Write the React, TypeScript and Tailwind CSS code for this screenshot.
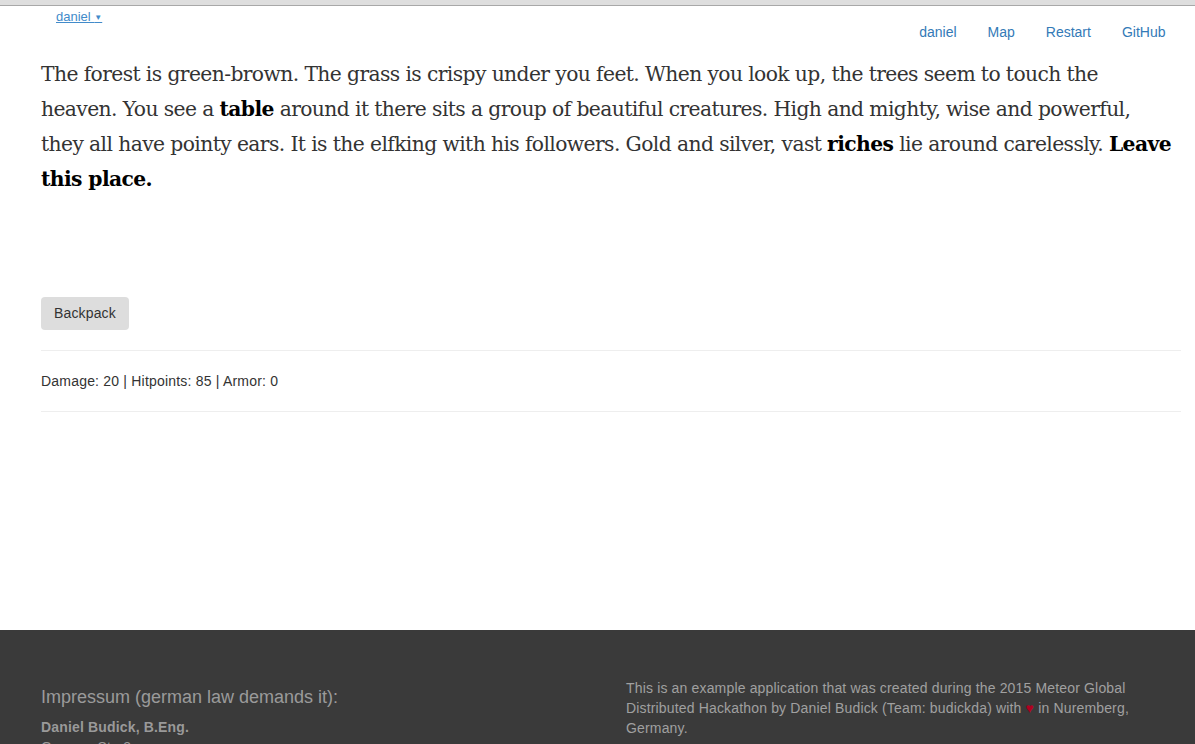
export default function App() {
  return (
    <div className="min-h-[744px] bg-white font-['Liberation_Sans',Arial,sans-serif] text-[14px] text-[#333]">
      <div className="h-[6px] border-b border-[#a8a8a8] bg-[#dedede]" />

      <div className="flex h-[51px] items-start justify-between pl-[41px] pr-[14px]">
        <a href="#" className="ml-[15px] mt-[3px] text-[13px] leading-[16px] text-[#428bca] underline">
          daniel <span className="text-[8px] align-middle">▼</span>
        </a>
        <ul className="mt-[1px] flex items-center">
          {["daniel", "Map", "Restart", "GitHub"].map((x) => (
            <li key={x}>
              <a href="#" className="block px-[15.5px] py-[15px] leading-[20px] text-[#337ab7]">
                {x}
              </a>
            </li>
          ))}
        </ul>
      </div>

      <div className="pl-[41px] pr-[14px]">
        <p className="whitespace-nowrap font-['DejaVu_Serif',serif] text-[20.3px] leading-[35px] tracking-[-0.6px] text-[#333]">
          The forest is green-brown. The grass is crispy under you feet. When you look up, the trees seem to
          touch the
          <br />
          heaven. You see a <b className="text-black">table</b> around it there sits a group of beautiful
          creatures. High and mighty, wise and powerful,
          <br />
          they all have pointy ears. It is the elfking with his followers. Gold and silver, vast{" "}
          <b className="text-black">riches</b> lie around carelessly. <b className="text-black">Leave</b>
          <br />
          <b className="text-black">this place.</b>
        </p>

        <button className="mt-[100px] rounded-[4px] bg-[#dddddd] px-[13px] py-[6px] leading-[21px] tracking-[0.15px] text-[#333]">
          Backpack
        </button>

        <hr className="mt-[20px] border-t border-[#eeeeee]" />
        <p className="py-[20px] leading-[20px] tracking-[0.2px]">Damage: 20 | Hitpoints: 85 | Armor: 0</p>
        <hr className="border-t border-[#eeeeee]" />
      </div>

      <footer className="mt-[218px] bg-[#3a3a3a] pl-[41px] pr-[14px] pt-[48px] pb-[30px] tracking-[0.16px] text-[#999]">
        <div className="grid grid-cols-2 gap-x-[30px]">
          <div>
            <h3 className="mt-[9px] text-[18px] leading-[20px] tracking-normal text-[#9a9a9a]">
              Impressum (german law demands it):
            </h3>
            <p className="mt-[10px] font-bold leading-[20px] text-[#999]">Daniel Budick, B.Eng.</p>
            <p className="leading-[20px]">Gruener Str. 3a</p>
            <p className="leading-[20px]">90403 Nuremberg</p>
          </div>
          <div className="leading-[20px] text-[#a0a0a0]">
            This is an example application that was created during the 2015 Meteor Global Distributed Hackathon
            by Daniel Budick (Team: budickda) with <span className="text-[#b00020]">♥</span> in Nuremberg,
            Germany.
          </div>
        </div>
      </footer>
    </div>
  );
}
